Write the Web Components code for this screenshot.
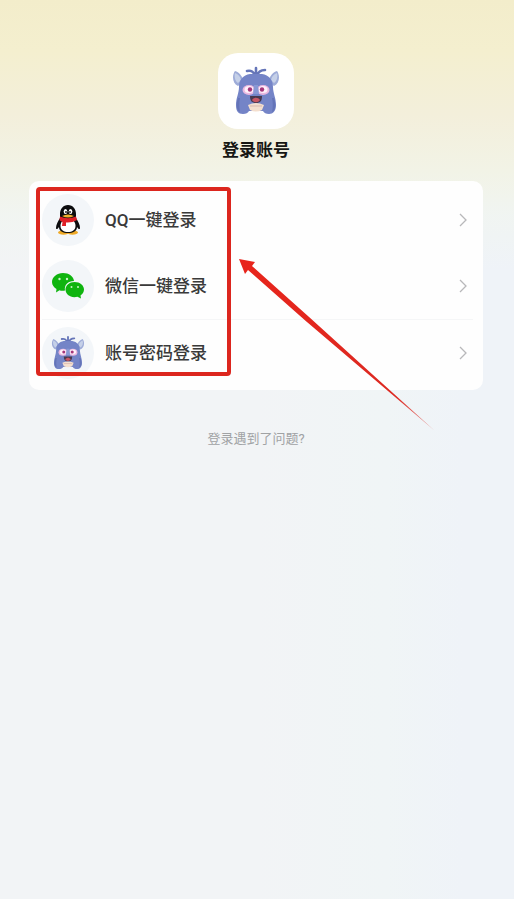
<!DOCTYPE html>
<html lang="zh-CN">
<head>
  <meta charset="UTF-8">
  <meta name="viewport" content="width=device-width, initial-scale=1.0">
  <title>登录账号</title>
  <style>
    body {
      margin: 0;
      min-height: 100vh;
      font-family: Roboto, "Noto Sans CJK SC", sans-serif;
      background: linear-gradient(#f3edcb 0, #f4efcf 50px, #f3efdb 115px, #f2f3e6 170px, rgba(241, 245, 240, 0.8) 215px, transparent 270px),
        linear-gradient(90deg, #f2f4f6 50%, #f0f5f6 75%, #eff3f8 90%);
    }
  </style>
</head>
<body>
  <login-page>
    <app-logo slot="logo"><monster-icon></monster-icon></app-logo>
    <span slot="title">登录账号</span>
    <login-card>
      <login-option><penguin-icon slot="icon"></penguin-icon>QQ一键登录</login-option>
      <login-option><wechat-icon slot="icon"></wechat-icon>微信一键登录</login-option>
      <login-option divided><monster-icon slot="icon"></monster-icon>账号密码登录</login-option>
      <mark-overlay slot="overlay"></mark-overlay>
    </login-card>
    <help-link slot="help">登录遇到了问题?</help-link>
  </login-page>

  <script>
    // Registers an element whose shadow root is filled from the markup
    function defineElement(name, markup) {
      const template = document.createElement('template');
      template.innerHTML = markup;

      customElements.define(name, class extends HTMLElement {
        constructor() {
          super();
          this.attachShadow({ mode: 'open' }).appendChild(template.content.cloneNode(true));
        }
      });
    }

    defineElement('login-page', `
      <style>
        :host {
          display: block;
          padding: 53px 31px 40px 29px;
        }
        header {
          display: flex;
          flex-direction: column;
          align-items: center;
          gap: 9px;
          margin-bottom: 19px;
        }
        h1 {
          margin: 0;
          font-size: 17px;
          line-height: 24px;
          font-weight: 700;
          color: #171714;
        }
        footer {
          margin-top: 40px;
          text-align: center;
        }
      </style>
      <header>
        <slot name="logo"></slot>
        <h1><slot name="title"></slot></h1>
      </header>
      <main><slot></slot></main>
      <footer><slot name="help"></slot></footer>
    `);

    defineElement('app-logo', `
      <style>
        :host {
          display: flex;
          align-items: center;
          justify-content: center;
          width: 76px;
          height: 76px;
          border-radius: 20px;
          background: #fff;
          --monster-size: 60px;
        }
      </style>
      <slot></slot>
    `);

    defineElement('login-card', `
      <style>
        :host {
          display: block;
          position: relative;
          padding: 6px 10px 5px 13px;
          border-radius: 10px;
          background: #fefefe;
        }
      </style>
      <slot></slot>
      <slot name="overlay"></slot>
    `);

    defineElement('login-option', `
      <style>
        :host {
          display: block;
        }
        button {
          display: flex;
          align-items: center;
          gap: 11px;
          box-sizing: border-box;
          width: 100%;
          height: 66px;
          padding: 0 6px 0 0;
          border: 0;
          background: none;
          font: inherit;
          font-size: 17px;
          line-height: 24px;
          font-weight: 500;
          color: #3a3a3a;
          text-align: left;
          cursor: pointer;
        }
        :host([divided]) button {
          border-top: 1px solid #f5f6f7;
        }
        .icon {
          display: flex;
          align-items: center;
          justify-content: center;
          width: 52px;
          height: 52px;
          border-radius: 50%;
          background: #f3f6f9;
        }
        .label {
          flex: 1;
        }
        .chevron {
          width: 8px;
          height: 14px;
        }
      </style>
      <button type="button">
        <span class="icon"><slot name="icon"></slot></span>
        <span class="label"><slot></slot></span>
        <svg class="chevron" viewBox="0 0 8 14" fill="none" stroke="#b8b8ba" stroke-width="1.3" aria-hidden="true">
          <path d="M1 1l6 6-6 6"/>
        </svg>
      </button>
    `);

    defineElement('help-link', `
      <style>
        :host {
          display: block;
          font-size: 13px;
          line-height: 18px;
        }
        a {
          color: #a0a2a4;
          text-decoration: none;
        }
      </style>
      <a href="#help"><slot></slot></a>
    `);

    // Red frame and arrow lying over the card
    defineElement('mark-overlay', `
      <style>
        :host {
          position: absolute;
          top: 6px;
          left: 7px;
          pointer-events: none;
        }
        .frame {
          box-sizing: border-box;
          width: 195px;
          height: 189px;
          border: 4px solid #dc261e;
          border-radius: 4px;
        }
        svg {
          position: absolute;
          top: 70px;
          left: 202px;
        }
      </style>
      <div class="frame"></div>
      <svg width="200" height="176" viewBox="0 0 200 176" aria-hidden="true">
        <defs>
          <linearGradient id="fade" gradientUnits="userSpaceOnUse" x1="1" y1="2" x2="198" y2="174">
            <stop offset="0" stop-color="#e8241b"/>
            <stop offset="0.8" stop-color="#dc2a22"/>
            <stop offset="1" stop-color="#dc2a22" stop-opacity="0.4"/>
          </linearGradient>
        </defs>
        <path fill="url(#fade)" d="M1 2L17 5L14 9L70.500 59.500L141.700 124.100L197 174L140.300 125.700L67.500 63.700L10 13L7 17Z"/>
      </svg>
    `);

    defineElement('monster-icon', `
      <style>
        :host {
          display: block;
        }
        svg {
          display: block;
          width: var(--monster-size, 42px);
          height: var(--monster-size, 42px);
        }
      </style>
      <svg viewBox="0 1 60 60" aria-hidden="true">
        <path fill="#9eacd8" d="M9 11C6 15 6 23 12 26L18 21C16 16 13 12 9 11ZM51 11C54 15 54 23 48 26L42 21C44 16 47 12 51 11Z"/>
        <path fill="#c5d0e8" d="M9 13C8 17 9 21 12 23L15 20C14 16 12 14 9 13ZM51 13C52 17 51 21 48 23L45 20C46 16 48 14 51 13Z"/>
        <path fill="none" stroke="#6575b8" stroke-width="2.6" stroke-linecap="round" d="M21 11C25 10 28 12 29 16M30 8V15M39 10C35 10 32 12 31 16"/>
        <path fill="#7484c7" d="M24 14H36C43 15 47 20 47 27C47 33 50 38 50 45C50 51 47 54 43 54C40 54 38 53 37 51H23C22 53 20 54 17 54C12 54 10 51 10 45C10 38 13 33 13 27C13 20 17 15 24 14Z"/>
        <path fill="#6474b8" d="M12 38C10 44 10 50 14 52C13 47 13 43 14 38ZM48 38C50 44 50 50 46 52C47 47 47 43 46 38Z"/>
        <ellipse cx="23" cy="30" rx="6.5" ry="5" fill="#e9b8e0"/>
        <ellipse cx="37" cy="30" rx="6.5" ry="5" fill="#e9b8e0"/>
        <ellipse cx="23" cy="29.5" rx="4.5" ry="3.5" fill="#fff1fa"/>
        <ellipse cx="37" cy="29.5" rx="4.5" ry="3.5" fill="#fff1fa"/>
        <circle cx="24" cy="29.5" r="2.2" fill="#a63579"/>
        <circle cx="36" cy="29.5" r="2.2" fill="#a63579"/>
        <path fill="#8798d4" d="M28 25H32L33 34H27Z"/>
        <path fill="#48394f" d="M24 36H36C36 41 34 43 30 43C26 43 24 41 24 36Z"/>
        <path fill="#c75564" d="M26 40C28 37 32 37 34 40C32 43 28 43 26 40Z"/>
        <path fill="#f4dfce" d="M22 45Q30 41 38 45L36 50Q30 53 24 50Z"/>
        <path stroke="#d8b7ad" stroke-width="1" d="M24 46H36"/>
      </svg>
    `);

    defineElement('penguin-icon', `
      <style>
        :host,
        svg {
          display: block;
        }
      </style>
      <svg width="26" height="30" viewBox="0 0 26 30" aria-hidden="true">
        <ellipse cx="8.5" cy="27.5" rx="5.5" ry="2.2" fill="#efaa27"/>
        <ellipse cx="17.5" cy="27.5" rx="5.5" ry="2.2" fill="#efaa27"/>
        <path fill="#0c0c0e" d="M13 0C18 0 21 4 21 9C21 11 21 12 21 13C23 16 25 20 25 23C25 25 23 24 22 22C22 26 18 28 13 28C8 28 4 26 4 22C3 24 1 25 1 23C1 20 3 16 5 13C5 12 5 11 5 9C5 4 8 0 13 0Z"/>
        <path fill="#fff" d="M13 14C18 14 20.5 17 20.5 21C20.5 25 17 27 13 27C9 27 5.5 25 5.5 21C5.5 17 8 14 13 14Z"/>
        <ellipse cx="10.5" cy="6.5" rx="1.8" ry="2.6" fill="#fff"/>
        <ellipse cx="15.5" cy="6.5" rx="1.8" ry="2.6" fill="#fff"/>
        <circle cx="11" cy="7" r="0.9" fill="#111"/>
        <circle cx="15" cy="7" r="0.9" fill="#111"/>
        <path fill="#f1b12c" d="M7 11Q13 8 19 11Q13 14 7 11Z"/>
        <path fill="#df2027" d="M5 11.5Q13 15 21 11.5L22 15Q17 18 11 17.5L11 21L7 21L7.5 17Q5 16 4.500 15Z"/>
      </svg>
    `);

    defineElement('wechat-icon', `
      <style>
        :host,
        svg {
          display: block;
        }
      </style>
      <svg width="32" height="26" viewBox="0 0 32 26" aria-hidden="true">
        <path fill="#0fb40f" d="M11 0C17 0 21.5 3.5 22 8C16 8 12 12 13 17.500C11 18 9 18 7.500 17.300L4 19.500L4.500 16C2 14.500 0 12 0 9C0 4 5 0 11 0Z"/>
        <path fill="#0fb40f" d="M22.5 9C28 9 32 12.500 32 16.500C32 19 30.500 21.200 28.500 22.500L29 25.500L25.500 23.700C19 25.500 13.500 21.500 13.500 16.500C13.500 12.500 17.500 9 22.500 9Z"/>
        <g fill="#c9f2c4">
          <circle cx="7.5" cy="6" r="1.2"/>
          <circle cx="15" cy="6" r="1.2"/>
          <circle cx="19.5" cy="14" r="1"/>
          <circle cx="26" cy="14" r="1"/>
        </g>
      </svg>
    `);
  </script>
</body>
</html>
